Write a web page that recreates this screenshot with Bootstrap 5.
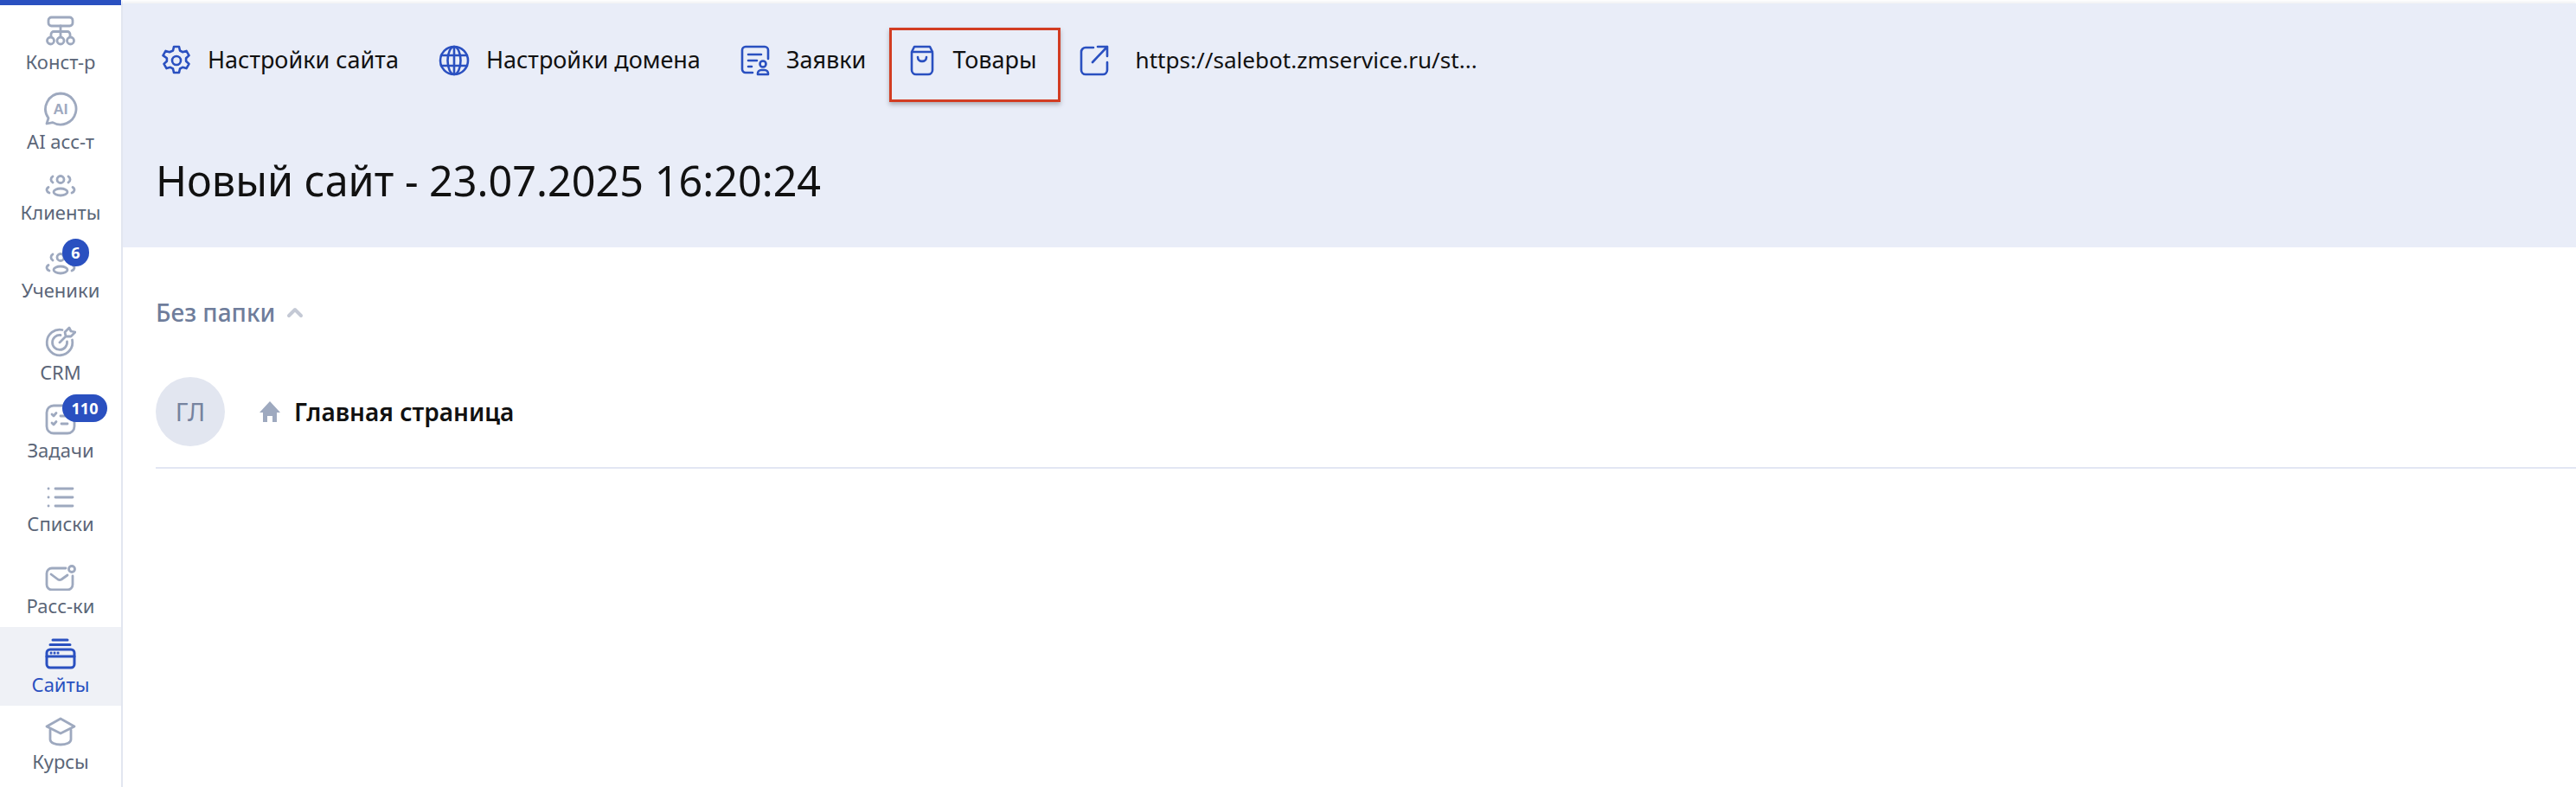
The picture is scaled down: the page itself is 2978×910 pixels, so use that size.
<!DOCTYPE html>
<html lang="ru">
<head>
<meta charset="utf-8">
<title>Новый сайт</title>
<link href="https://cdn.jsdelivr.net/npm/bootstrap@5.3.0/dist/css/bootstrap.min.css" rel="stylesheet">
<style>
html,body{height:100%;overflow:hidden}
body{font-family:"Noto Sans","Open Sans",sans-serif;color:#111;background:#fff}
.shell{height:910px}
.side{width:142px;flex:none;border-right:2px solid #e2e6f0;border-top:6px solid transparent;position:relative}
.side::before{content:"";position:absolute;left:0;right:0;top:-6px;height:6px;background:#2a50c0}
.side-item{position:relative;padding-bottom:12px;color:#5b6678;font-size:22px;line-height:26px;text-decoration:none}
.side-item svg{display:block;fill:none;stroke:#9ea9bf;stroke-width:2.8;stroke-linecap:round;stroke-linejoin:round;margin-bottom:4px}
.side-item.on{background:#eff1f6;color:#2a50c0}
.side-item.on svg{stroke:#2a50c0;stroke-width:3}
.si-1{height:90px}.si-2{height:92px}.si-3{height:82px}.si-4{height:90px}.si-5{height:95px}
.si-6{height:90px}.si-7{height:85px}.si-8{height:95px}.si-9{height:91px}.si-10{height:89px}
.pip{position:absolute;background:#2a50c0;color:#fff;font-weight:700;font-size:18px;line-height:1;display:flex;align-items:center;justify-content:center;border-radius:16px;height:32px}
.pip-a{left:72px;top:6px;width:31px}
.pip-b{left:72px;top:1px;width:52px}
.topband{background:#e9edf8;margin-top:4px;height:282px;box-shadow:0 -2px 3px #f0f1f4}
.tool-row{padding:28px 0 0 23px}
.tool{display:flex;align-items:center;height:86px;padding:0 21px 11px 19px;gap:19px;font-size:27px;color:#111;text-decoration:none;white-space:nowrap;border:3px solid transparent}
.tool svg{flex:none;fill:none;stroke:#2a50c0;stroke-width:2.6;stroke-linecap:round;stroke-linejoin:round}
.tool.mark-box{border-color:#d23c22;box-shadow:0 3px 5px rgba(60,60,70,.35);padding-right:24px;margin-left:3px}
.tool-wide{gap:31px;font-size:26.100px}
.page-title{font-size:48.500px;font-weight:400;line-height:60px;margin:0;padding:60px 0 0 38px;color:#111}
.folder{padding:57px 0 0 38px;color:#6f7d9b;font-size:28px;line-height:36px;font-weight:500;gap:13px}
.crumb-arrow{fill:none;stroke:#c4c9d5;stroke-width:4;stroke-linecap:round;stroke-linejoin:round}
.rowline{margin:57px 0 0 38px;padding-bottom:24px;border-bottom:2px solid #e2e6f3}
.avatar{width:80px;height:80px;border-radius:50%;background:#e2e6f0;color:#76839f;font-size:29px}
.home{fill:#9ea9bf;margin-left:40px;margin-right:16px}
.page-name{font-size:28px;font-weight:600;color:#111}
</style>
</head>
<body>
<div class="d-flex shell">
  <nav class="side d-flex flex-column">
    <a class="side-item si-1 d-flex flex-column align-items-center justify-content-end" href="#">
      <svg width="36" height="36" viewBox="0 0 36 36"><rect x="4" y="2" width="28" height="10" rx="3.5"/><path d="M18 12v12M7 24v-2.500a3 3 0 0 1 3-3h16a3 3 0 0 1 3 3V24"/><circle cx="6.500" cy="29" r="4"/><circle cx="18" cy="29" r="4"/><circle cx="29.500" cy="29" r="4"/></svg>
      <span>Конст-р</span></a>
    <a class="side-item si-2 d-flex flex-column align-items-center justify-content-end" href="#">
      <svg width="40" height="40" viewBox="0 0 40 40"><path d="M20 2a18 18 0 1 1-9 33.600l-7 1.400 2-6.500A18 18 0 0 1 20 2z"/><text x="20" y="26" text-anchor="middle" font-family="Liberation Sans,sans-serif" font-weight="700" font-size="17" fill="#9ea9bf" stroke="none">AI</text></svg>
      <span>AI асс-т</span></a>
    <a class="side-item si-3 d-flex flex-column align-items-center justify-content-end" href="#">
      <svg width="36" height="26" viewBox="0 0 36 26"><circle cx="18" cy="5.500" r="4"/><ellipse cx="18" cy="20" rx="8" ry="4"/><path d="M9 2a4 4 0 0 0 0 7M27 2a4 4 0 0 1 0 7M4 14.500c-3 2-2.500 5 1 6.500M32 14.500c3 2 2.500 5-1 6.500"/></svg>
      <span>Клиенты</span></a>
    <a class="side-item si-4 d-flex flex-column align-items-center justify-content-end" href="#">
      <svg width="36" height="26" viewBox="0 0 36 26"><circle cx="18" cy="5.500" r="4"/><ellipse cx="18" cy="20" rx="8" ry="4"/><path d="M9 2a4 4 0 0 0 0 7M27 2a4 4 0 0 1 0 7M4 14.500c-3 2-2.500 5 1 6.500M32 14.500c3 2 2.500 5-1 6.500"/></svg>
      <span>Ученики</span><span class="pip pip-a">6</span></a>
    <a class="side-item si-5 d-flex flex-column align-items-center justify-content-end" href="#">
      <svg width="36" height="36" viewBox="0 0 36 36"><path d="M20 4.500A14.800 14.800 0 1 0 31.500 16"/><path d="M18 10.500a8.500 8.500 0 1 0 7.500 7.500"/><path d="M17 19l7-7M24 12l-1-5 5-5 2 4 5 1-5 5z"/></svg>
      <span>CRM</span></a>
    <a class="side-item si-6 d-flex flex-column align-items-center justify-content-end" href="#">
      <svg width="36" height="36" viewBox="0 0 36 36"><rect x="2" y="2" width="32" height="32" rx="8"/><path d="M8 12l2 2 3-3.500M8 22l2 2 3-3.500M18 14h8M19 23h7"/></svg>
      <span>Задачи</span><span class="pip pip-b">110</span></a>
    <a class="side-item si-7 d-flex flex-column align-items-center justify-content-end" href="#">
      <svg width="32" height="26" viewBox="0 0 32 26"><path d="M2 3h.1M2 13h.1M2 23h.1M10 3h20M10 13h20M10 23h20"/></svg>
      <span>Списки</span></a>
    <a class="side-item si-8 d-flex flex-column align-items-center justify-content-end" href="#">
      <svg width="36" height="30" viewBox="0 0 36 30"><path d="M24 4H8a6 6 0 0 0-6 6v13a6 6 0 0 0 6 6h18a6 6 0 0 0 6-6V13"/><path d="M7 11l8 6a4 4 0 0 0 4 0l7-5"/><circle cx="31" cy="5" r="3.500"/></svg>
      <span>Расс-ки</span></a>
    <a class="side-item si-9 on d-flex flex-column align-items-center justify-content-end" href="#">
      <svg width="36" height="36" viewBox="0 0 36 36"><path d="M9 2h17M6 7.500h23"/><rect x="2" y="13" width="32" height="21" rx="4"/><path d="M2 21h32M7 17h.1M11 17h.1M15 17h.1"/></svg>
      <span>Сайты</span></a>
    <a class="side-item si-10 d-flex flex-column align-items-center justify-content-end" href="#">
      <svg width="36" height="34" viewBox="0 0 36 34"><path d="M18 2L2 11l16 8 16-8z"/><path d="M6 15v11c0 8 24 8 24 0V15"/></svg>
      <span>Курсы</span></a>
  </nav>
  <main class="flex-grow-1">
    <section class="topband">
      <div class="d-flex tool-row">
        <a class="tool" href="#"><svg width="34" height="36" viewBox="0 0 34 36"><path d="M14 2h6l1 4.500 3 1.700 4.500-1.300 3 5.200-3.400 3.200v3.400l3.400 3.200-3 5.200-4.500-1.300-3 1.700-1 4.500h-6l-1-4.500-3-1.700-4.500 1.300-3-5.200 3.400-3.200v-3.400L1.500 12.100l3-5.200L9 8.200l4-1.700z"/><circle cx="17" cy="18" r="5"/></svg>Настройки сайта</a>
        <a class="tool" href="#"><svg width="36" height="36" viewBox="0 0 36 36"><circle cx="18" cy="18" r="16"/><ellipse cx="18" cy="18" rx="7.500" ry="16"/><path d="M3 12h30M3 24h30M18 2v32"/></svg>Настройки домена</a>
        <a class="tool" href="#"><svg width="34" height="36" viewBox="0 0 34 36"><path d="M14 32H6a4 4 0 0 1-4-4V6a4 4 0 0 1 4-4h22a4 4 0 0 1 4 4v10"/><path d="M9 11h15M9 18h10M9 25h4"/><circle cx="26" cy="22" r="3.500"/><path d="M20 34v-1a4 4 0 0 1 4-4h4a4 4 0 0 1 4 4v1z"/></svg>Заявки</a>
        <a class="tool mark-box" href="#"><svg width="32" height="36" viewBox="0 0 32 36"><path d="M7 2h18l3 6H4zM4 8v21a5 5 0 0 0 5 5h14a5 5 0 0 0 5-5V8"/><path d="M11 14c0 6.500 10 6.500 10 0"/></svg>Товары</a>
        <a class="tool tool-wide" href="#"><svg width="34" height="36" viewBox="0 0 34 36"><path d="M16 3H7a5 5 0 0 0-5 5v21a5 5 0 0 0 5 5h20a5 5 0 0 0 5-5V20"/><path d="M15 20L32 2M21 2h11v11"/></svg>https://salebot.zmservice.ru/st...</a>
      </div>
      <h1 class="page-title">Новый сайт - 23.07.2025 16:20:24</h1>
    </section>
    <div class="folder d-flex align-items-center">
      <span>Без папки</span>
      <svg class="crumb-arrow" width="20" height="14" viewBox="0 0 20 14"><path d="M3 11l7-7 7 7"/></svg>
    </div>
    <div class="rowline d-flex align-items-center">
      <div class="avatar d-flex align-items-center justify-content-center">ГЛ</div>
      <svg class="home" width="24" height="24" viewBox="0 0 24 24"><path d="M12 0L24 13h-4v11h-5v-7H9v7H4V13H0z"/></svg>
      <span class="page-name">Главная страница</span>
    </div>
  </main>
</div>
<script src="https://cdn.jsdelivr.net/npm/bootstrap@5.3.0/dist/js/bootstrap.bundle.min.js"></script>
</body>
</html>
